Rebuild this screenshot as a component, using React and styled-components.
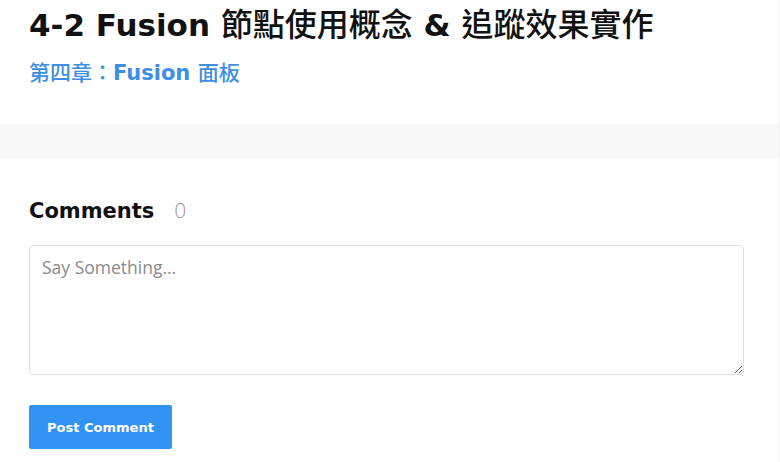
import React from 'react';
import styled, { createGlobalStyle } from 'styled-components';

const GlobalStyle = createGlobalStyle`
  html, body {
    margin: 0;
    padding: 0;
    background: #fff;
  }

  body {
    font-family: "DejaVu Sans", "Noto Sans CJK TC", sans-serif;
    overflow: hidden;
  }
`;

const headingFont = `"DejaVu Sans", "Noto Sans CJK TC", sans-serif`;

const Page = styled.div`
  width: 780px;
  height: 462px;
  overflow: hidden;
  border-right: 1px solid #f3f3f3;
  box-sizing: border-box;
`;

const PostHeader = styled.header`
  padding: 3px 29px 0 29px;
`;

const Title = styled.h1`
  margin: 0;
  font-family: ${headingFont};
  font-size: 31px;
  font-weight: 700;
  line-height: 38px;
  color: #111;
  white-space: nowrap;
`;

// CJK runs in the headings are set lighter than the Latin words
const Han = styled.span`
  font-family: "Noto Sans CJK TC", sans-serif;
  font-weight: ${({ $weight }) => $weight || 500};
  font-size: ${({ $size }) => $size || 'inherit'};
`;

const Chapter = styled.a`
  display: block;
  margin-top: 13px;
  font-family: ${headingFont};
  font-size: 21px;
  font-weight: 700;
  line-height: 28px;
  color: #3d8fe3;
  text-decoration: none;
`;

const Band = styled.div`
  height: 34px;
  margin-top: 37px;
  background: #f8f8f8;
`;

const CommentSection = styled.section`
  padding: 37px 29px 0 29px;
`;

const CommentHeading = styled.h2`
  display: flex;
  align-items: baseline;
  gap: 20px;
  margin: 0;
  font-family: ${headingFont};
  font-size: 21px;
  font-weight: 700;
  line-height: 30px;
  color: #111;
`;

const Count = styled.span`
  font-family: "Open Sans", sans-serif;
  font-size: 21px;
  font-weight: 300;
  color: #9a9a9a;
`;

const TextBox = styled.textarea`
  display: block;
  box-sizing: border-box;
  width: 715px;
  height: 130px;
  margin-top: 19px;
  padding: 9px 12px;
  border: 1px solid #dedede;
  border-radius: 4px;
  font-family: "Open Sans", sans-serif;
  font-size: 17.5px;
  line-height: 24px;
  color: #333;
  resize: vertical;
  outline: none;

  &::placeholder {
    color: #8a8a8a;
  }
`;

const PostButton = styled.button`
  display: block;
  margin-top: 30px;
  width: 143px;
  height: 44px;
  border: none;
  border-radius: 2px;
  background: #3393f5;
  color: #fff;
  font-family: ${headingFont};
  font-size: 13px;
  font-weight: 700;
  cursor: pointer;
`;

const App = () => (
  <>
    <GlobalStyle />
    <Page>
      <PostHeader>
        <Title>
          4-2 Fusion <Han $size="32px">節點使用概念</Han> &amp; <Han $size="32px">追蹤效果實作</Han>
        </Title>
        <Chapter href="#">
          <Han $size="21px">第四章：</Han>Fusion <Han $size="21px">面板</Han>
        </Chapter>
      </PostHeader>

      <Band />

      <CommentSection>
        <CommentHeading>
          Comments
          <Count>0</Count>
        </CommentHeading>
        <TextBox placeholder="Say Something..." />
        <PostButton>Post Comment</PostButton>
      </CommentSection>
    </Page>
  </>
);

export default App;
